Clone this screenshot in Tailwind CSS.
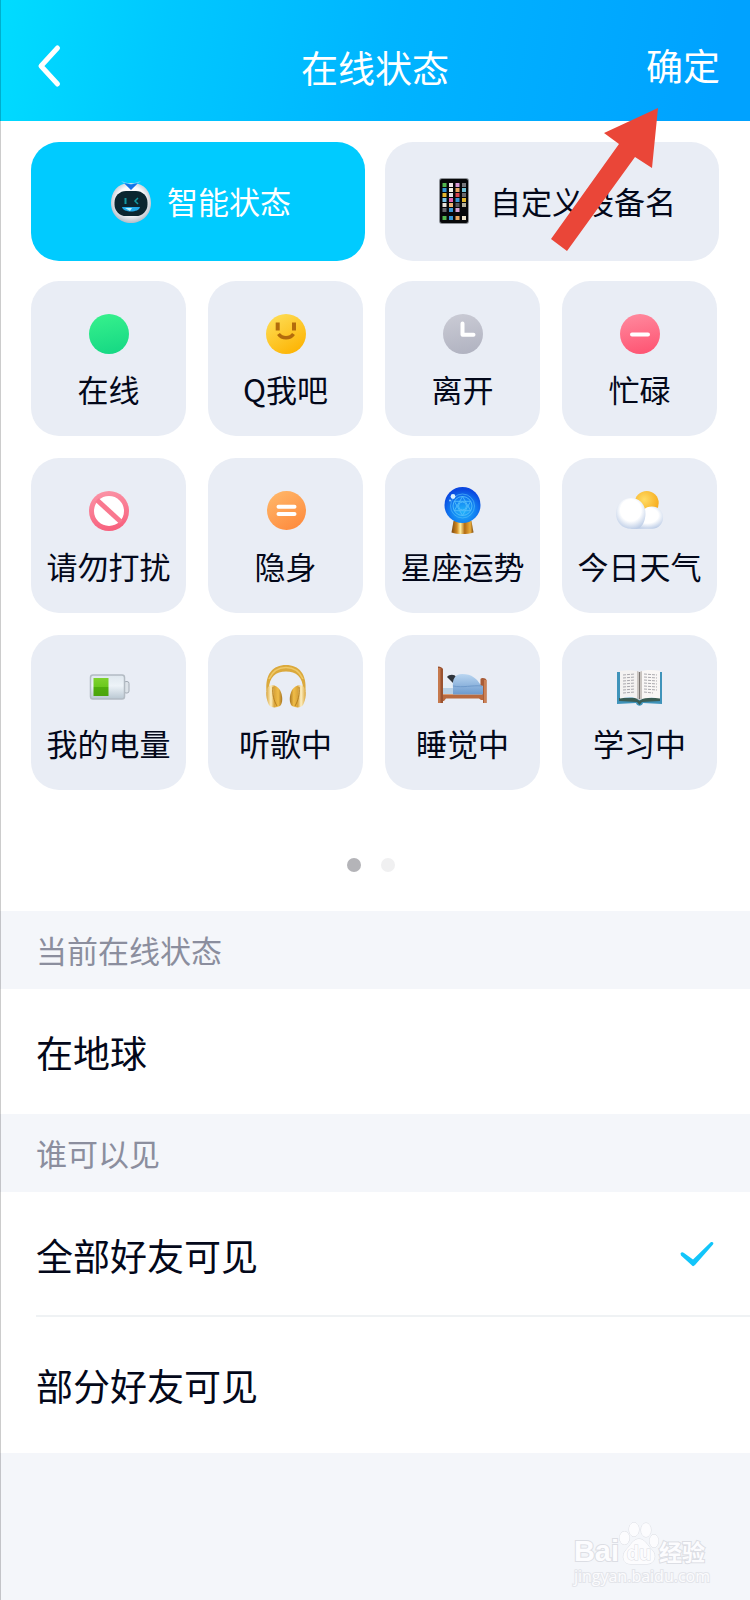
<!DOCTYPE html>
<html lang="zh-CN">

<head>
    <meta charset="UTF-8">
    <title>在线状态</title>
    <meta name="viewport" content="width=device-width, initial-scale=1.0">
    <script src="https://cdn.jsdelivr.net/npm/@tailwindcss/browser@4"></script>
</head>

<body class="bg-[#f4f6fa] text-[#03081a] font-['Noto_Sans_CJK_SC',sans-serif]">
    <div class="relative min-h-screen flex flex-col">

        <header class="grid grid-cols-[1fr_auto_1fr] items-center h-[121px] pt-3 px-[30px] text-white text-[37px] leading-[56px] bg-[linear-gradient(100deg,#00dcff_0%,#00c8ff_22%,#00b4ff_52%,#00a2ff_95%)]">
            <button type="button" aria-label="返回" class="justify-self-start">
                <svg class="w-10 h-12" viewBox="0 0 40 48" fill="none" stroke="currentColor" stroke-width="5" stroke-linecap="round" stroke-linejoin="round">
                    <path d="M27.500 5 L11 23 L27.500 41" />
                </svg>
            </button>
            <h1>在线状态</h1>
            <button type="button" class="justify-self-end pb-1">确定</button>
        </header>

        <main>
            <section class="bg-white px-[31px] pt-[21px] pb-[39px]">
                <div class="grid grid-cols-2 gap-5 text-[31px] leading-[46px]">
                    <button type="button" class="flex items-center justify-center gap-[10px] h-[119px] pb-[2px] rounded-[28px] bg-[#00cbff] text-white">
                        <svg class="w-[52px] h-[52px]" viewBox="0 0 52 52">
                            <defs>
                                <radialGradient id="robotHead" cx="50%" cy="45%" r="58%">
                                    <stop offset="0.600" stop-color="#fbfbfd" />
                                    <stop offset="1" stop-color="#aab4c0" />
                                </radialGradient>
                            </defs>
                            <path d="M26 8 C39 7 46 17 46 28 C46 40 37 48 26 48 C15 48 6 40 6 28 C6 17 13 7 26 8Z" fill="url(#robotHead)" />
                            <path d="M16 6 L26 9 L36 6 L26 14Z" fill="#5fd3ff" />
                            <path d="M19 8 L26 9.500 L33 8 L26 15Z" fill="#1573e8" />
                            <rect x="9.500" y="16" width="33" height="25" rx="11.500" fill="#0b2630" />
                            <path d="M20.500 23 V29" stroke="#1599a2" stroke-width="2" />
                            <path d="M33 23 L30 26 L33 29" stroke="#1599a2" stroke-width="1.500" fill="none" />
                            <path d="M17 32 H35 C34 38 18 38 17 32Z" fill="#21a9e8" />
                            <path d="M20 33 H27 L25 36Z" fill="#b5f2ff" />
                        </svg>
                        <span>智能状态</span>
                    </button>
                    <button type="button" class="flex items-center justify-center gap-[10px] h-[119px] pb-[2px] rounded-[28px] bg-[#e9edf5]">
                        <svg class="w-[52px] h-[52px]" viewBox="0 0 52 52">
                            <rect x="11" y="3" width="30" height="46" rx="3" fill="#8c9096" />
                            <rect x="12" y="4" width="28" height="44" rx="2" fill="#07080a" />
                            <!-- app rows, then the dock -->
                            <g>
                                <rect x="14.500" y="8" width="4" height="4" fill="#53b84e" />
                                <rect x="21" y="8" width="4" height="4" fill="#eee6e8" />
                                <rect x="27.500" y="8" width="4" height="4" fill="#d99bd8" />
                                <rect x="34" y="8" width="4" height="4" fill="#77787c" />
                                <rect x="14.500" y="13" width="4" height="4" fill="#3598d8" />
                                <rect x="21" y="13" width="4" height="4" fill="#f5f2e8" />
                                <rect x="27.500" y="13" width="4" height="4" fill="#eaa860" />
                                <rect x="34" y="13" width="4" height="4" fill="#70c4d8" />
                                <rect x="14.500" y="18" width="4" height="4" fill="#e4b82d" />
                                <rect x="21" y="18" width="4" height="4" fill="#e2e2e6" />
                                <rect x="27.500" y="18" width="4" height="4" fill="#d9434e" />
                                <rect x="34" y="18" width="4" height="4" fill="#67686c" />
                                <rect x="14.500" y="23" width="4" height="4" fill="#7cc5e8" />
                                <rect x="21" y="23" width="4" height="4" fill="#e263b4" />
                                <rect x="27.500" y="23" width="4" height="4" fill="#3598d8" />
                                <rect x="34" y="23" width="4" height="4" fill="#e4b82d" />
                                <rect x="14.500" y="28" width="4" height="4" fill="#ece5da" />
                                <rect x="21" y="28" width="4" height="4" fill="#e9b472" />
                                <rect x="27.500" y="28" width="4" height="4" fill="#55565a" />
                                <rect x="34" y="28" width="4" height="4" fill="#b5b19c" />
                                <rect x="14.500" y="33" width="4" height="4" fill="#66676b" />
                                <rect x="21" y="33" width="4" height="4" fill="#3598d8" />
                                <rect x="27.500" y="33" width="4" height="4" fill="#d7a5d9" />
                                <rect x="14.500" y="41" width="4" height="4" fill="#53b84e" />
                                <rect x="21" y="41" width="4" height="4" fill="#3598d8" />
                                <rect x="27.500" y="41" width="4" height="4" fill="#eaa860" />
                                <rect x="34" y="41" width="4" height="4" fill="#f0e6ce" />
                            </g>
                        </svg>
                        <span>自定义设备名</span>
                    </button>
                </div>

                <div class="grid grid-cols-4 gap-[22px] mt-5 pr-[2px] text-[31px] leading-[46px]">
                    <button type="button" class="flex flex-col items-center gap-[6px] pt-[27px] pb-6 rounded-[28px] bg-[#e9edf5]">
                        <svg class="w-[52px] h-[52px]" viewBox="0 0 52 52">
                            <defs>
                                <linearGradient id="green" x1="0.400" y1="0" x2="0.600" y2="1">
                                    <stop stop-color="#35f08c" />
                                    <stop offset="1" stop-color="#16d884" />
                                </linearGradient>
                            </defs>
                            <circle cx="26" cy="26" r="20" fill="url(#green)" />
                        </svg>
                        <span>在线</span>
                    </button>
                    <button type="button" class="flex flex-col items-center gap-[6px] pt-[27px] pb-6 rounded-[28px] bg-[#e9edf5]">
                        <svg class="w-[52px] h-[52px]" viewBox="0 0 52 52">
                            <defs>
                                <linearGradient id="yellow" x1="0.200" y1="0" x2="0.800" y2="1">
                                    <stop stop-color="#fedd55" />
                                    <stop offset="1" stop-color="#fdb200" />
                                </linearGradient>
                            </defs>
                            <circle cx="26" cy="26" r="20" fill="url(#yellow)" />
                            <g fill="none" stroke="#b36b0c" stroke-width="4">
                                <path d="M17.700 14.500 V22.500 M34 14.500 V22.500" />
                                <path d="M18.500 26 C22 31 30 31 33.500 26" stroke-width="3.500" />
                            </g>
                        </svg>
                        <span>Q我吧</span>
                    </button>
                    <button type="button" class="flex flex-col items-center gap-[6px] pt-[27px] pb-6 rounded-[28px] bg-[#e9edf5]">
                        <svg class="w-[52px] h-[52px]" viewBox="0 0 52 52">
                            <defs>
                                <linearGradient id="grey" x1="0.400" y1="0" x2="0.600" y2="1">
                                    <stop stop-color="#c9cad4" />
                                    <stop offset="1" stop-color="#b1b3c1" />
                                </linearGradient>
                            </defs>
                            <circle cx="26" cy="26" r="20" fill="url(#grey)" />
                            <path d="M25.500 15.500 V26.800 H36.500" fill="none" stroke="#fff" stroke-width="4" stroke-linecap="round" stroke-linejoin="round" />
                        </svg>
                        <span>离开</span>
                    </button>
                    <button type="button" class="flex flex-col items-center gap-[6px] pt-[27px] pb-6 rounded-[28px] bg-[#e9edf5]">
                        <svg class="w-[52px] h-[52px]" viewBox="0 0 52 52">
                            <defs>
                                <linearGradient id="red" x1="0.400" y1="0" x2="0.600" y2="1">
                                    <stop stop-color="#ff879c" />
                                    <stop offset="1" stop-color="#fe5573" />
                                </linearGradient>
                            </defs>
                            <circle cx="26" cy="26" r="20" fill="url(#red)" />
                            <path d="M18 26.500 H34" stroke="#fff" stroke-width="4" stroke-linecap="round" />
                        </svg>
                        <span>忙碌</span>
                    </button>

                    <button type="button" class="flex flex-col items-center gap-[6px] pt-[27px] pb-6 rounded-[28px] bg-[#e9edf5]">
                        <svg class="w-[52px] h-[52px]" viewBox="0 0 52 52">
                            <defs>
                                <linearGradient id="pink" x1="0.400" y1="0" x2="0.600" y2="1">
                                    <stop stop-color="#fb92a5" />
                                    <stop offset="1" stop-color="#f75f7c" />
                                </linearGradient>
                            </defs>
                            <circle cx="26" cy="26" r="20" fill="url(#pink)" />
                            <circle cx="26" cy="26" r="15" fill="#fff" />
                            <path d="M14 15 L38 37" stroke="#f9788f" stroke-width="5" />
                        </svg>
                        <span>请勿打扰</span>
                    </button>
                    <button type="button" class="flex flex-col items-center gap-[6px] pt-[27px] pb-6 rounded-[28px] bg-[#e9edf5]">
                        <svg class="w-[52px] h-[52px]" viewBox="0 0 52 52">
                            <defs>
                                <linearGradient id="orange" x1="0.200" y1="0" x2="0.800" y2="1">
                                    <stop stop-color="#ffb668" />
                                    <stop offset="1" stop-color="#fe8a3d" />
                                </linearGradient>
                            </defs>
                            <circle cx="26.500" cy="25.500" r="19.500" fill="url(#orange)" />
                            <path d="M18.500 21.800 H34.500 M18.500 29 H34.500" stroke="#fff" stroke-width="4" stroke-linecap="round" />
                        </svg>
                        <span>隐身</span>
                    </button>
                    <button type="button" class="flex flex-col items-center gap-[6px] pt-[27px] pb-6 rounded-[28px] bg-[#e9edf5]">
                        <svg class="w-[52px] h-[52px]" viewBox="0 0 52 52">
                            <defs>
                                <radialGradient id="ball" cx="52%" cy="68%" r="62%">
                                    <stop stop-color="#22b4fa" />
                                    <stop offset="0.550" stop-color="#1181f2" />
                                    <stop offset="1" stop-color="#0b47e0" />
                                </radialGradient>
                                <linearGradient id="base">
                                    <stop stop-color="#7c4810" />
                                    <stop offset="0.250" stop-color="#d18a22" />
                                    <stop offset="0.400" stop-color="#fff0a0" />
                                    <stop offset="0.600" stop-color="#b36b12" />
                                    <stop offset="0.850" stop-color="#eaae3c" />
                                    <stop offset="1" stop-color="#7c4810" />
                                </linearGradient>
                            </defs>
                            <path d="M16.500 36 H34.500 L36.500 47.500 C30 49.500 21 49.500 14.500 47.500Z" fill="url(#base)" />
                            <circle cx="25.500" cy="20" r="18" fill="url(#ball)" />
                            <g fill="none" stroke="#55bdfb" stroke-width="0.900">
                                <circle cx="25.500" cy="21" r="12" opacity="0.700" />
                                <circle cx="25.500" cy="21" r="9.500" />
                                <circle cx="25.500" cy="21" r="4" />
                                <path d="M25.500 11.500 L33.700 25.700 H17.300Z M25.500 30.500 L17.300 16.300 H33.700Z" />
                            </g>
                            <circle cx="16" cy="11.500" r="2.400" fill="#d7efff" />
                            <circle cx="13" cy="15.500" r="1" fill="#8fcaff" />
                        </svg>
                        <span>星座运势</span>
                    </button>
                    <button type="button" class="flex flex-col items-center gap-[6px] pt-[27px] pb-6 rounded-[28px] bg-[#e9edf5]">
                        <svg class="w-[52px] h-[52px]" viewBox="0 0 52 52">
                            <defs>
                                <radialGradient id="sun" cx="40%" cy="35%" r="65%">
                                    <stop stop-color="#ffdc66" />
                                    <stop offset="1" stop-color="#f7ab1c" />
                                </radialGradient>
                                <radialGradient id="cloud" cx="50%" cy="40%" r="64%">
                                    <stop offset="0.550" stop-color="#fff" />
                                    <stop offset="1" stop-color="#b9cae5" />
                                </radialGradient>
                            </defs>
                            <circle cx="32.700" cy="18" r="12" fill="url(#sun)" />
                            <path d="M17 43.700 H38 A11 11 0 0 0 38 21.500 C33 21.500 29 24 26 29Z" fill="url(#cloud)" />
                            <path d="M17 13 C26 13 31.500 20 31.500 28.500 C31.500 36 28 43.700 22 43.700 H17 C8 43.700 2 37 2 28.500 C2 20 8 13 17 13Z" fill="url(#cloud)" />
                        </svg>
                        <span>今日天气</span>
                    </button>

                    <button type="button" class="flex flex-col items-center gap-[6px] pt-[27px] pb-6 rounded-[28px] bg-[#e9edf5]">
                        <svg class="w-[52px] h-[52px]" viewBox="0 0 52 52">
                            <defs>
                                <linearGradient id="cell" x2="0" y2="1">
                                    <stop stop-color="#dfe7ee" />
                                    <stop offset="0.450" stop-color="#edf3f8" />
                                    <stop offset="1" stop-color="#b9c7d2" />
                                </linearGradient>
                                <linearGradient id="charge" x2="0" y2="1">
                                    <stop stop-color="#7fd22e" />
                                    <stop offset="0.500" stop-color="#6bc91d" />
                                    <stop offset="0.510" stop-color="#4fae0c" />
                                    <stop offset="1" stop-color="#4ba40b" />
                                </linearGradient>
                            </defs>
                            <rect x="41" y="19.500" width="5" height="11.500" rx="2" fill="#dde3e9" stroke="#a3abb4" />
                            <rect x="7.500" y="13" width="34" height="24" rx="2.500" fill="url(#cell)" stroke="#b3bbc3" stroke-width="1.500" />
                            <rect x="10.500" y="16" width="15" height="18" fill="url(#charge)" />
                        </svg>
                        <span>我的电量</span>
                    </button>
                    <button type="button" class="flex flex-col items-center gap-[6px] pt-[27px] pb-6 rounded-[28px] bg-[#e9edf5]">
                        <svg class="w-[52px] h-[52px]" viewBox="0 0 52 52">
                            <defs>
                                <linearGradient id="gold">
                                    <stop stop-color="#d9a439" />
                                    <stop offset="0.300" stop-color="#fdf0c4" />
                                    <stop offset="0.500" stop-color="#d9a43a" />
                                    <stop offset="0.750" stop-color="#f0bd48" />
                                    <stop offset="1" stop-color="#a87521" />
                                </linearGradient>
                                <linearGradient id="goldBack" x1="1" x2="0">
                                    <stop stop-color="#d9a439" />
                                    <stop offset="0.300" stop-color="#fdf0c4" />
                                    <stop offset="0.500" stop-color="#d9a43a" />
                                    <stop offset="0.750" stop-color="#f0bd48" />
                                    <stop offset="1" stop-color="#a87521" />
                                </linearGradient>
                            </defs>
                            <path d="M6.500 29 C5 12 13 3 26 3 C39 3 47 12 45.500 29 L43 27 C43 15 36 9.500 26 9.500 C16 9.500 9 15 9 27Z" fill="#dba93c" />
                            <path d="M9 17 C13 8 19 5.500 26 5.500 C33 5.500 39 8 43 17" fill="none" stroke="#efc968" stroke-width="1.500" />
                            <path d="M8 25 C11 22 17 23 20 28 C23 34 23 41 20 44 C16 46 11 46 9 43 C6 37 5 29 8 25Z" fill="url(#gold)" />
                            <path d="M44 25 C41 22 35 23 32 28 C29 34 29 41 32 44 C36 46 41 46 43 43 C46 37 47 29 44 25Z" fill="url(#goldBack)" />
                            <path d="M13 25 C12 32 14 39 17 44 M39 25 C40 32 38 39 35 44" fill="none" stroke="#b7801f" />
                        </svg>
                        <span>听歌中</span>
                    </button>
                    <button type="button" class="flex flex-col items-center gap-[6px] pt-[27px] pb-6 rounded-[28px] bg-[#e9edf5]">
                        <svg class="w-[52px] h-[52px]" viewBox="0 0 52 52">
                            <defs>
                                <linearGradient id="blanket" x2="0" y2="1">
                                    <stop stop-color="#bad6f1" />
                                    <stop offset="1" stop-color="#6c9ace" />
                                </linearGradient>
                            </defs>
                            <path d="M3 31 H47 V38 H44 L42 36.500 H9 L7 39 H3Z" fill="#b96a3f" />
                            <path d="M5 32.500 H45" stroke="#dc9d73" />
                            <path d="M6 23 H20 V32 H6Z" fill="#b8d0e5" />
                            <path d="M6 21 H17 V26 H6Z" fill="#e5eef6" />
                            <path d="M10 15 C12 12 18 12 19 15 L16 21 L13 18Z" fill="#2f343b" />
                            <path d="M16 26 C15 17 18 12 25 12 C35 12 40 17 43 22 L46 24 V32.500 H16Z" fill="url(#blanket)" />
                            <path d="M16 24 C26 26 35 23 45 24" fill="none" stroke="#6f9acb" />
                            <path d="M1 5 C1 4 5 5 6 7 V41 H1Z" fill="#9b5330" />
                            <path d="M1 6 H3.500 V41 H1Z" fill="#c6794d" />
                            <path d="M43.500 17 C45 15 49 16 49.500 18 V41 H46 V24 L43.500 23Z" fill="#a95d38" />
                            <path d="M47 18 H49.500 V41 H47Z" fill="#cc8256" />
                        </svg>
                        <span>睡觉中</span>
                    </button>
                    <button type="button" class="flex flex-col items-center gap-[6px] pt-[27px] pb-6 rounded-[28px] bg-[#e9edf5]">
                        <svg class="w-[52px] h-[52px]" viewBox="0 0 52 52">
                            <path d="M3 10 H48 V42 L29 41 C28 44.500 23 44.500 22 41 L3 42Z" fill="#3f93ba" />
                            <path d="M5 36 L22 36 L25.500 39 L29 36 L46 36 V39 L28 40 L25.500 43 L23 40 L5 39Z" fill="#3b5d54" />
                            <path d="M6 9 C13 7.500 21 8 25.500 10 V38 C20 34.500 13 35.500 6 36.500Z" fill="#f4f2f1" />
                            <path d="M25.500 10 C31 7.500 39 7.500 46 9 V36.500 C38 35 31 35.500 25.500 38Z" fill="#f9f7f6" />
                            <path d="M23 9 L25.500 10 L28 9 V37 L25.500 38 L23 37Z" fill="#c9c4c0" />
                            <path d="M25.500 10 V37" stroke="#77726f" />
                            <g fill="none" stroke="#aaa9ae" stroke-dasharray="3 1">
                                <path d="M9 13 L21 12 M9 16 L21 15 M9 19 L21 18 M9 22 L21 21 M9 25 L21 24 M9 28 L21 27 M9 31 L21 30" />
                                <path d="M30 12 L43 13 M30 15 L43 16 M30 18 L43 19 M30 21 L43 22 M30 24 L43 25 M30 27 L43 28 M30 30 L39 31" />
                            </g>
                        </svg>
                        <span>学习中</span>
                    </button>
                </div>

                <div class="flex justify-center gap-5 mt-[68px] pr-2">
                    <span class="size-[14px] rounded-full bg-[#b4b4b8]"></span>
                    <span class="size-[14px] rounded-full bg-[#f0f0f1]"></span>
                </div>
            </section>

            <h2 class="px-9 py-4 text-[31px] leading-[46px] text-[#8b8e9e]">当前在线状态</h2>
            <p class="bg-white px-9 pt-[35px] pb-[33px] text-[37px] leading-[57px]">在地球</p>

            <fieldset>
                <legend class="px-9 py-4 text-[31px] leading-[46px] text-[#8b8e9e]">谁可以见</legend>
                <div class="bg-white pl-9 text-[37px] leading-[57px]">
                    <label class="flex items-center justify-between pt-[35px] pb-[31px] pr-9 border-b-2 border-[#eff2f4]">
                        <span>全部好友可见</span>
                        <input type="radio" name="visible" class="peer sr-only" checked>
                        <svg class="w-9 h-9 invisible peer-checked:visible" viewBox="0 0 36 36" fill="#12c5fa">
                            <path d="M2.500 15.500 C3.500 14 4.500 14 6 15 L15 21.500 L33 4 C35 3.500 36 5 35 6.500 L17 27 C15.500 28.500 14.500 28.500 13.500 27 L3 17.500 Z" />
                        </svg>
                    </label>
                    <label class="flex items-center justify-between pt-10 pb-[39px] pr-9">
                        <span>部分好友可见</span>
                        <input type="radio" name="visible" class="peer sr-only">
                        <svg class="w-9 h-9 invisible peer-checked:visible" viewBox="0 0 36 36" fill="#12c5fa">
                            <path d="M2.500 15.500 C3.500 14 4.500 14 6 15 L15 21.500 L33 4 C35 3.500 36 5 35 6.500 L17 27 C15.500 28.500 14.500 28.500 13.500 27 L3 17.500 Z" />
                        </svg>
                    </label>
                </div>
            </fieldset>
        </main>

        <footer class="mt-auto self-end pr-10 pb-[14px] text-[#fcfcfe] [-webkit-text-stroke:2px_#dcdee4] [paint-order:stroke_fill]">
            <div class="flex items-end">
                <span class="font-['Liberation_Sans',sans-serif] font-bold text-[29px] leading-[30px]">Bai</span>
                <svg class="w-10 h-11" viewBox="0 0 40 44" fill="#fcfcfe" stroke="#dcdee4" stroke-width="1">
                    <ellipse cx="5.500" cy="16" rx="5" ry="6.500" />
                    <ellipse cx="15" cy="7.500" rx="5" ry="7" />
                    <ellipse cx="27" cy="8" rx="5" ry="7" />
                    <ellipse cx="35" cy="19" rx="4.500" ry="6.500" />
                    <path d="M20 17 C26 17 28 23 33 28 C38 33 36 42 28 42 H12 C4 42 2 34 7 28 C12 23 14 17 20 17Z" />
                    <text x="20" y="38" text-anchor="middle" font-size="20" font-weight="bold" font-family="Liberation Sans, sans-serif" class="[-webkit-text-stroke:2px_#d5d7de]">du</text>
                </svg>
                <span class="font-bold text-[23px] leading-[30px]">经验</span>
            </div>
            <div class="font-['Open_Sans',sans-serif] text-[16px] leading-[20px] [-webkit-text-stroke:2px_#e3e5ea]">jingyan.baidu.com</div>
        </footer>

        <!-- screen edge -->
        <div class="absolute inset-y-0 left-0 w-px bg-black/20"></div>

        <!-- arrow pointing at the confirm button -->
        <svg class="absolute top-[108px] right-[92px] w-[107px] h-[144px] pointer-events-none" viewBox="0 0 107 144" fill="#ea4638">
            <path d="M107 0 L53 25 L68 36 L0 131 L16 143 L84 49 L101 60Z" />
        </svg>
    </div>
</body>

</html>
